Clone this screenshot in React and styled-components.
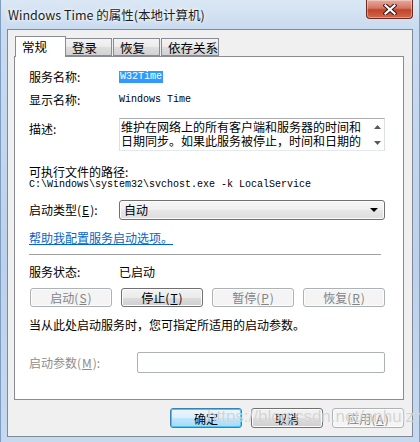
import React from "react";
import styled, { createGlobalStyle } from "styled-components";

const GlobalStyle = createGlobalStyle`
  html, body {
    margin: 0;
    padding: 0;
    background: #ffffff;
    overflow: hidden;
  }
  * {
    box-sizing: border-box;
  }
`;

const cjk = `"Noto Sans CJK SC", "Noto Sans", sans-serif`;

const Window = styled.div`
  position: relative;
  display: flex;
  flex-direction: column;
  width: 420px;
  height: 442px;
  background: linear-gradient(180deg, #dbe7f4 0px, #c9dbef 29px, #bcd2ea 60%, #c6d9ee 100%);
  border-left: 1px solid #7f9dc3;
  border-right: 1px solid #7f9dc3;
  font-family: ${cjk};
  color: #000;
`;

const TitleBar = styled.div`
  display: flex;
  align-items: flex-start;
  height: 29px;
  padding-left: 7px;
  flex: none;
`;

const Title = styled.div`
  font-size: 12.5px;
  line-height: 29px;
  color: #1b1b1b;
  text-shadow: 0 0 6px #ffffff, 0 0 3px #ffffff;
  white-space: nowrap;
`;

const CloseButton = styled.div`
  margin-left: auto;
  margin-right: 6px;
  width: 47px;
  height: 19px;
  display: flex;
  align-items: center;
  justify-content: center;
  border: 1px solid #6b2a22;
  border-top: none;
  border-radius: 0 0 4px 4px;
  background: linear-gradient(180deg, #e9a99c 0%, #d47664 45%, #c2432c 55%, #cf6a4a 100%);
  box-shadow: inset 0 0 0 1px rgba(255, 255, 255, 0.35);
`;

const Client = styled.div`
  flex: 1;
  margin: 0 6px 5px;
  background: #f0f0f0;
  border: 1px solid #7e8a99;
  padding: 6px 8px 0 6px;
  display: flex;
  flex-direction: column;
`;

const TabRow = styled.div`
  display: flex;
  align-items: flex-end;
  height: 20px;
  padding-left: 1px;
  position: relative;
  z-index: 1;
`;

const Tab = styled.div`
  width: ${({ $w }) => $w}px;
  height: ${({ $active }) => ($active ? 21 : 18)}px;
  margin-left: ${({ $gap }) => $gap || 0}px;
  margin-bottom: ${({ $active }) => ($active ? -1 : 0)}px;
  border: 1px solid #898c95;
  border-bottom: ${({ $active }) => ($active ? "none" : "1px solid #898c95")};
  border-left: ${({ $noLeft }) => ($noLeft ? "none" : "1px solid #898c95")};
  background: ${({ $active }) =>
    $active ? "#ffffff" : "linear-gradient(180deg, #f3f3f3 0%, #ebebeb 50%, #dddddd 51%, #d2d2d2 100%)"};
  font-size: 12.5px;
  line-height: ${({ $active }) => ($active ? 19 : 17)}px;
  padding-left: 6px;
  white-space: nowrap;
  overflow: hidden;
`;

const Panel = styled.div`
  height: 344px;
  background: #ffffff;
  border: 1px solid #898c95;
  padding: 12px 18px 0 14px;
  display: flex;
  flex-direction: column;
`;

const Row = styled.div`
  display: flex;
  align-items: ${({ $top }) => ($top ? "flex-start" : "center")};
  height: ${({ $h }) => $h}px;
  margin-top: ${({ $mt }) => $mt || 0}px;
  flex: none;
`;

const Label = styled.div`
  width: ${({ $w }) => $w || 90}px;
  flex: none;
  font-size: 12px;
  line-height: 16px;
  padding-top: ${({ $pt }) => $pt || 0}px;
  color: ${({ $disabled }) => ($disabled ? "#8d8d8d" : "#000")};
  white-space: nowrap;
`;

const Value = styled.div`
  font-size: 12px;
  line-height: 16px;
`;

const Mono = styled.span`
  font-family: "Liberation Mono", "DejaVu Sans Mono", monospace;
  font-size: 10px;
  line-height: 12px;
  background: ${({ $selected }) => ($selected ? "#3399ff" : "transparent")};
  color: ${({ $selected }) => ($selected ? "#ffffff" : "#000")};
  padding: ${({ $selected }) => ($selected ? "0 1px" : "0")};
  white-space: pre;
`;

const DescBox = styled.div`
  width: 267px;
  height: 33px;
  display: flex;
  border-top: 1px solid #abadb3;
  border-left: 1px solid #dbdfe6;
  border-right: 1px solid #dbdfe6;
  border-bottom: 1px solid #e3e9ef;
  background: #ffffff;
`;

const DescText = styled.div`
  width: 245px;
  padding: 1px 0 0 1px;
  font-size: 12px;
  line-height: 14px;
`;

const ScrollArrows = styled.div`
  margin-left: auto;
  width: 14px;
  display: flex;
  flex-direction: column;
  align-items: center;
  justify-content: space-between;
  padding: 6px 0 5px;
`;

const PathBlock = styled.div`
  margin-top: 14px;
  display: flex;
  flex-direction: column;
`;

const PathLine = styled.div`
  height: 13px;
  line-height: 13px;
  font-size: 12px;
  display: flex;
  align-items: center;
`;

const Select = styled.div`
  width: 267px;
  height: 20px;
  border: 1px solid #707070;
  border-radius: 3px;
  background: linear-gradient(180deg, #f6f6f6 0%, #efefef 50%, #e6e6e6 51%, #dedede 100%);
  box-shadow: inset 0 0 0 1px #fcfcfc;
  display: flex;
  align-items: center;
  padding: 0 6px 0 4px;
  font-size: 12px;
  line-height: 16px;
`;

const LinkText = styled.a`
  font-size: 12px;
  line-height: 16px;
  color: #0066cc;
  text-decoration: underline;
  cursor: pointer;
`;

const Separator = styled.div`
  width: 352px;
  height: 1px;
  margin-top: 8px;
  background: #a0a0a0;
  flex: none;
`;

const ButtonGrid = styled.div`
  display: grid;
  grid-template-columns: repeat(4, 82px);
  column-gap: 9px;
  margin-top: 8px;
  margin-left: 1px;
`;

const Button = styled.div`
  width: ${({ $w }) => ($w ? `${$w}px` : "auto")};
  height: ${({ $h }) => $h || 19}px;
  display: flex;
  align-items: center;
  justify-content: center;
  font-size: 12px;
  border-radius: 3px;
  border: 1px solid
    ${({ $state }) => ($state === "disabled" ? "#adb2b5" : $state === "default" ? "#3c7fb1" : "#707070")};
  background: ${({ $state }) =>
    $state === "disabled"
      ? "#f4f4f4"
      : $state === "default"
      ? "linear-gradient(180deg, #eaf6fd 0%, #d9f0fc 50%, #bee6fd 51%, #a7d9f5 100%)"
      : "linear-gradient(180deg, #f2f2f2 0%, #ebebeb 50%, #dddddd 51%, #cfcfcf 100%)"};
  box-shadow: ${({ $state }) =>
    $state === "default" ? "inset 0 0 0 1px #48c6f5" : "inset 0 0 0 1px #fcfcfc"};
  color: ${({ $state }) => ($state === "disabled" ? "#838383" : "#000")};
  white-space: nowrap;
`;

const Key = styled.span`
  text-decoration: underline;
  margin: 0 1px;
`;

const Note = styled.div`
  margin-top: 10px;
  font-size: 12px;
  line-height: 16px;
`;

const Input = styled.div`
  width: 248px;
  height: 21px;
  border: 1px solid #adb2b5;
  border-radius: 2px;
  background: #ffffff;
`;

const Footer = styled.div`
  display: flex;
  justify-content: flex-end;
  gap: 9px;
  margin-top: 8px;
`;

const Watermark = styled.div`
  position: absolute;
  left: 206px;
  top: 407px;
  font-family: "Liberation Sans", Arial, sans-serif;
  font-size: 17px;
  color: rgba(185, 185, 185, 0.6);
  text-shadow: 0 0 1px rgba(255, 255, 255, 0.8);
  pointer-events: none;
  white-space: nowrap;
`;

function Arrow({ up }) {
  return (
    <svg width="7" height="4" viewBox="0 0 7 4">
      <path d={up ? "M0 4 L3.5 0 L7 4 Z" : "M0 0 L3.5 4 L7 0 Z"} fill="#5a5a5a" />
    </svg>
  );
}

function CloseIcon() {
  return (
    <svg width="14" height="11" viewBox="0 0 14 11">
      <path d="M2.5 1.5 L11.5 9.5 M11.5 1.5 L2.5 9.5" stroke="#3b1410" strokeWidth="4.2" strokeLinecap="square" />
      <path d="M2.5 1.5 L11.5 9.5 M11.5 1.5 L2.5 9.5" stroke="#ffffff" strokeWidth="2.2" strokeLinecap="square" />
    </svg>
  );
}

export default function App() {
  return (
    <>
      <GlobalStyle />
      <Window>
        <TitleBar>
          <Title>Windows Time 的属性(本地计算机)</Title>
          <CloseButton>
            <CloseIcon />
          </CloseButton>
        </TitleBar>
        <Client>
          <TabRow>
            <Tab $active $w={51}>常规</Tab>
            <Tab $w={46} $noLeft>登录</Tab>
            <Tab $w={47} $gap={1}>恢复</Tab>
            <Tab $w={58} $gap={1}>依存关系</Tab>
          </TabRow>
          <Panel>
            <Row $h={16}>
              <Label>服务名称:</Label>
              <Mono $selected>W32Time</Mono>
            </Row>
            <Row $h={16} $mt={7}>
              <Label>显示名称:</Label>
              <Mono>Windows Time</Mono>
            </Row>
            <Row $h={33} $mt={10} $top>
              <Label $pt={3}>描述:</Label>
              <DescBox>
                <DescText>维护在网络上的所有客户端和服务器的时间和日期同步。如果此服务被停止，时间和日期的</DescText>
                <ScrollArrows>
                  <Arrow up />
                  <Arrow />
                </ScrollArrows>
              </DescBox>
            </Row>
            <PathBlock>
              <PathLine>可执行文件的路径:</PathLine>
              <PathLine>
                <Mono>C:\Windows\system32\svchost.exe -k LocalService</Mono>
              </PathLine>
            </PathBlock>
            <Row $h={20} $mt={9}>
              <Label>
                启动类型(<Key>E</Key>):
              </Label>
              <Select>
                <Value>自动</Value>
                <svg width="8" height="4" viewBox="0 0 8 4" style={{ marginLeft: "auto" }}>
                  <path d="M0 0 L8 0 L4 4 Z" fill="#000" />
                </svg>
              </Select>
            </Row>
            <Row $h={16} $mt={10}>
              <LinkText>帮助我配置服务启动选项。</LinkText>
            </Row>
            <Separator />
            <Row $h={16} $mt={9}>
              <Label>服务状态:</Label>
              <Value>已启动</Value>
            </Row>
            <ButtonGrid>
              <Button $state="disabled">
                启动(<Key>S</Key>)
              </Button>
              <Button>
                停止(<Key>T</Key>)
              </Button>
              <Button $state="disabled">
                暂停(<Key>P</Key>)
              </Button>
              <Button $state="disabled">
                恢复(<Key>R</Key>)
              </Button>
            </ButtonGrid>
            <Note>当从此处启动服务时，您可指定所适用的启动参数。</Note>
            <Row $h={21} $mt={19}>
              <Label $w={108} $disabled>
                启动参数(<Key>M</Key>):
              </Label>
              <Input />
            </Row>
          </Panel>
          <Footer>
            <Button $state="default" $w={72} $h={20}>
              确定
            </Button>
            <Button $w={72} $h={20}>
              取消
            </Button>
            <Button $state="disabled" $w={72} $h={20}>
              应用(<Key>A</Key>)
            </Button>
          </Footer>
        </Client>
        <Watermark>https://blog.csdn.net/anhuizhj</Watermark>
      </Window>
    </>
  );
}
